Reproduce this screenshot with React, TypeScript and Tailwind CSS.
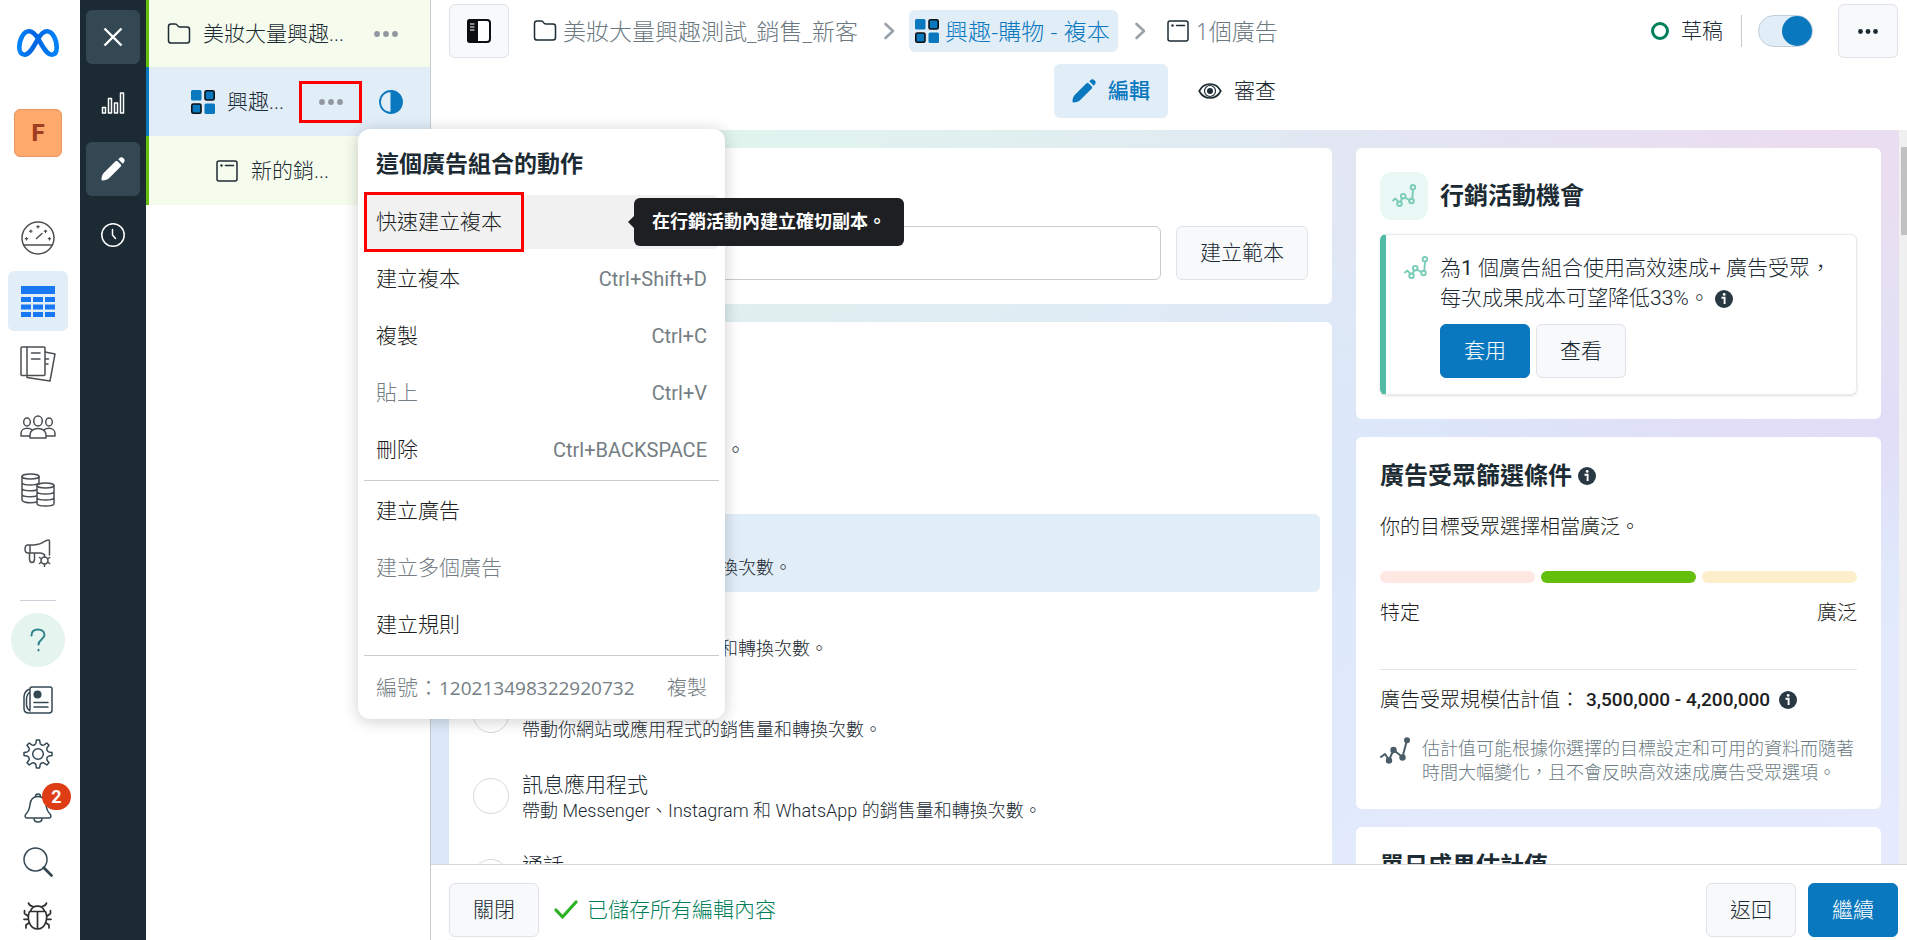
import { ReactNode, SVGProps } from "react";
import { clsx } from "clsx";

type IconProps = SVGProps<SVGSVGElement>;

const Icon = ({ children, ...props }: IconProps) => (
  <svg
    fill="none"
    stroke="currentColor"
    strokeWidth="1.5"
    strokeLinecap="round"
    strokeLinejoin="round"
    aria-hidden="true"
    {...props}
  >
    {children}
  </svg>
);

const MetaLogo = () => (
  <Icon viewBox="0 0 42 28" className="w-[42px] h-7" strokeWidth="4.6">
    <defs>
      <linearGradient id="meta" x1="0" x2="1">
        <stop offset="0" stopColor="#0082fb" />
        <stop offset="0.4" stopColor="#0064e0" />
        <stop offset="0.7" stopColor="#0073ee" />
        <stop offset="1" stopColor="#0082fb" />
      </linearGradient>
    </defs>
    <path
      stroke="url(#meta)"
      d="M21 9.5C18 4.8 15.500 2.300 12 2.300C6.500 2.300 2.300 10.500 2.300 18.500C2.300 23 4.500 25.700 7.600 25.700C11.500 25.700 14.500 21 17.500 16L21 9.900C24 4.800 26.800 2.300 30 2.300C35.500 2.300 39.700 10.200 39.700 18.600C39.700 23.300 37.700 25.700 34.600 25.700C31.200 25.700 28.700 22.500 24.500 15.500Z"
    />
  </Icon>
);

const GaugeIcon = () => (
  <Icon viewBox="0 0 34 34" className="size-[34px]">
    <circle cx="17" cy="17" r="16" />
    <path d="M2.500 24H31.500M15.500 17.500L21 12.500" />
    <path
      strokeWidth="1.2"
      d="M17 4.500V7M15.800 5.700H18.200M9.800 9V11.400M8.600 10.200H11M24.500 9V11.400M23.300 10.200H25.700M5.500 16.500V19M4.300 17.700H6.700M28.500 16.500V19M27.300 17.700H29.700"
    />
  </Icon>
);

const TableIcon = () => (
  <svg viewBox="0 0 34 31" className="w-[34px] h-[31px]" fill="#1877f2">
    <path d="M0 0H34V8H0ZM0 11H10V16H0ZM12 11H22V16H12ZM24 11H34V16H24ZM0 18.500H10V23.500H0ZM12 18.500H22V23.500H12ZM24 18.500H34V23.500H24ZM0 26H10V31H0ZM12 26H22V31H12ZM24 26H34V31H24Z" />
  </svg>
);

const PagesIcon = () => (
  <Icon viewBox="0 0 36 36" className="size-9">
    <rect x="1" y="1" width="24" height="28.500" rx="1" />
    <path d="M7 1V29.500M11.500 7H20M11.500 13H20M25 6L35 8L30 35L7 31.500V29.500M25.500 13H28.500M25.500 18H28" />
  </Icon>
);

const PeopleIcon = () => (
  <Icon viewBox="0 0 36 24" className="w-9 h-6">
    <ellipse cx="18" cy="6" rx="4.300" ry="5" />
    <ellipse cx="7" cy="7" rx="3.300" ry="4" />
    <ellipse cx="29" cy="7" rx="3.300" ry="4" />
    <path d="M10 23V20C10 16.500 13 13.500 18 13.500S26 16.500 26 20V23ZM10 21H1V18.500C1 15.500 3.500 13.300 7 13.300C9 13.300 10.500 13.700 11.700 14.700M26 21H35V18.500C35 15.500 32.500 13.300 29 13.300C27 13.300 25.500 13.700 24.300 14.700" />
  </Icon>
);

const CoinsIcon = () => (
  <Icon viewBox="0 0 34 34" className="size-[34px]">
    <ellipse cx="9.500" cy="3.500" rx="8.500" ry="2.500" />
    <path d="M1 3.500V27C1 28.500 5 29.800 9.500 29.800C12 29.800 14 29.600 16 29M18 3.500V11M1 9.500C1 11 5 12 9.500 12C13 12 16.500 11.300 17.500 10.300M1 15.300C1 16.800 5 17.800 9.500 17.800C12 17.800 14 17.600 15.800 17M1 21.200C1 22.700 5 23.700 9.500 23.700C12 23.700 14 23.500 15.800 23" />
    <ellipse cx="24.500" cy="12.500" rx="8.500" ry="2.500" />
    <path d="M16 12.500V30.500C16 32 20 33 24.500 33S33 32 33 30.500V12.500M16 18.500C16 20 20 21 24.500 21S33 20 33 18.500M16 24.500C16 26 20 27 24.500 27S33 26 33 24.500" />
  </Icon>
);

const MegaphoneIcon = () => (
  <Icon viewBox="0 0 28 28" className="size-7">
    <path d="M6 6C10 6 14 6 18 3.800C20.500 2.400 22.500 1 24.500 1C25.300 1 25.500 1.600 25.500 2.500V16M6 6V14H16C18 14 18.500 14.500 20 15.500M6 6H4C2 6 1 7.500 1 10S2 14 4 14H6M5.500 14V20C5.500 22.500 6.500 23.500 8 23.500C9.800 23.500 10.500 22 10.500 20V14" />
    <circle cx="20.500" cy="21.500" r="3.500" />
    <path d="M20.500 15.500V18M20.500 25V27.500M15.500 18.500L17.500 20M23.500 23L25.700 24.500M25.700 18.500L23.500 20M15.500 24.500L17.500 23" />
  </Icon>
);

const NewsIcon = () => (
  <Icon viewBox="0 0 30 28" className="w-[30px] h-7">
    <path d="M7 23.500V3C7 1.500 7.800 1 9 1H27C28.500 1 29 1.800 29 3V24C29 26 28 27 26 27H6C3 27 1 25.500 1 22.500V11C1 8 3 5 5.500 3.500M7 6C4.500 8 3.500 10 3.500 13V19C3.500 22 5 23.500 7 25M11 16.500H25M11 21H25" />
    <circle cx="14.500" cy="8.500" r="3.300" fill="currentColor" />
  </Icon>
);

const GearIcon = () => (
  <Icon viewBox="0 0 30 30" className="size-[30px]">
    <circle cx="15" cy="15" r="5.300" />
    <path d="M12.900 4.200L13.400 1H16.600L17.100 4.200A3 3 0 0 0 21.200 5.900L23.800 4L26 6.200L24.100 8.800A3 3 0 0 0 25.800 12.900L29 13.400V16.600L25.800 17.100A3 3 0 0 0 24.100 21.200L26 23.800L23.800 26L21.200 24.100A3 3 0 0 0 17.100 25.800L16.600 29H13.400L12.900 25.800A3 3 0 0 0 8.800 24.100L6.200 26L4 23.800L5.900 21.200A3 3 0 0 0 4.200 17.100L1 16.600V13.400L4.200 12.900A3 3 0 0 0 5.900 8.800L4 6.200L6.200 4L8.800 5.900A3 3 0 0 0 12.900 4.200Z" />
  </Icon>
);

const BellIcon = () => (
  <Icon viewBox="0 0 30 30" className="size-[30px]">
    <path d="M15 3.500C10 3.500 7.500 7 7 11.500C6.500 16.500 5.500 18.500 3 21C1.500 22.800 1.800 25 4 25H26C28.200 25 28.500 22.800 27 21C24.500 18.500 23.500 16.500 23 11.500C22.500 7 20 3.500 15 3.500ZM12.500 3.700C12.500 2 13.500 1 15 1S17.500 2 17.500 3.700M11 25.200C11 27.500 12.500 29 15 29S19 27.500 19 25.200" />
  </Icon>
);

const SearchIcon = () => (
  <Icon viewBox="0 0 30 30" className="size-[30px]">
    <circle cx="12.500" cy="12.500" r="11.500" />
    <path d="M20.800 20.800L28.500 28.500" strokeWidth="2.800" />
  </Icon>
);

const BugIcon = () => (
  <Icon viewBox="0 0 30 30" className="size-[30px] text-[#303030]" strokeWidth="1.700">
    <path d="M6.500 10.500H22.500C24 14 24 18.500 22.500 22C21 26 18.500 28 14.500 28S8 26 6.500 22C5 18.500 5 14 6.500 10.500ZM14.500 10.500V28M7.500 10.300C8.500 7 11 5.200 14.500 5.200S20.500 7 21.500 10.300M5.500 2C6 4 7.500 5 10 5.500M23.500 2C23 4 21.500 5 19 5.500M5.500 15.500L1.500 12.500V9.500M5.300 18.300H1M6.500 21.500L3 24V27M23.500 15.500L27.500 12.500V9.500M23.700 18.300H28M22.500 21.500L26 24V27" />
  </Icon>
);

const CloseIcon = () => (
  <Icon viewBox="0 0 24 24" className="size-6" strokeWidth="2.400" strokeLinecap="butt">
    <path d="M3.500 3.500L20.500 20.500M20.500 3.500L3.500 20.500" />
  </Icon>
);

const BarsIcon = () => (
  <Icon viewBox="0 0 24 24" className="size-6">
    <path d="M1.500 16.500H4.500V22H1.500ZM7.500 7.500H10.500V22H7.500ZM13.500 12H16.500V22H13.500ZM19.500 2H22.500V22H19.500Z" />
  </Icon>
);

const PencilIcon = () => (
  <svg viewBox="0 0 24 24" className="size-6" fill="currentColor" aria-hidden="true">
    <path d="M14.500 4.200Q15.500 3.300 16.500 4.200L19.800 7.500Q20.700 8.500 19.800 9.500L8.500 20.800C6.500 22.800 4.500 23.500 1.500 23.500Q.5 23.500 .5 22.500C.5 19.500 1.200 17.500 3.200 15.500ZM17.300 2.300L18.300 1.300C19.600 0 21.200 0 22.400 1.200L22.800 1.600C24 2.800 24 4.400 22.700 5.700L21.700 6.700Z" />
  </svg>
);

const ClockIcon = () => (
  <Icon viewBox="0 0 24 24" className="size-6">
    <circle cx="12" cy="12" r="11.200" />
    <path d="M11.500 6.500V12L14.500 15.500" />
  </Icon>
);

const FolderIcon = () => (
  <Icon viewBox="0 0 24 24" className="size-6 shrink-0 text-[#1c2b33]">
    <path d="M1.500 4.500C1.500 2.800 2.300 2 4 2H8C9.500 2 10 2.500 10.500 3.500C11 4.600 11.500 5 13 5H20C21.700 5 22.500 5.800 22.500 7.500V18.500C22.500 20.200 21.700 21 20 21H4C2.300 21 1.500 20.200 1.500 18.500Z" />
  </Icon>
);

const GridIcon = () => (
  <svg viewBox="0 0 24 24" className="size-6 shrink-0" fill="#0a78be" aria-hidden="true">
    <rect width="10.500" height="10.500" rx="1.500" />
    <rect x="14" y=".8" width="9.200" height="9.200" rx="1.500" stroke="#0b0f12" strokeWidth="1.600" />
    <rect x=".8" y="14" width="9.200" height="9.200" rx="1.500" stroke="#0b0f12" strokeWidth="1.600" />
    <rect x="13.500" y="13.500" width="10.500" height="10.500" rx="1.500" />
  </svg>
);

const WindowIcon = () => (
  <Icon viewBox="0 0 24 24" className="size-6 shrink-0 text-[#1c2b33]">
    <rect x="2" y="2" width="20" height="20" rx="2" />
    <path d="M10.500 6.500H18.500" />
    <circle cx="6.500" cy="6.500" r="1.200" fill="currentColor" stroke="none" />
  </Icon>
);

const PanelIcon = () => (
  <svg viewBox="0 0 24 24" className="size-6" aria-hidden="true">
    <rect x="1" y="1" width="22" height="22" rx="3" fill="#fff" stroke="#0b0f12" strokeWidth="2" />
    <path d="M3 0H11V24H3C1 24 0 23 0 21V3C0 1 1 0 3 0Z" fill="#0b0f12" />
    <path d="M3 5H7.500M3 8H7.500M3 11H7.500" stroke="#fff" strokeWidth="1.200" />
  </svg>
);

const EyeIcon = () => (
  <Icon viewBox="0 0 24 24" className="size-6" strokeWidth="1.700">
    <path d="M1.200 12C3.500 7.500 7.500 5 12 5S20.500 7.500 22.800 12C20.500 16.500 16.500 19 12 19S3.500 16.500 1.200 12Z" />
    <circle cx="12" cy="12" r="5.500" strokeWidth="1.200" />
    <circle cx="12" cy="12" r="3" fill="currentColor" stroke="none" />
  </Icon>
);

const ChevronIcon = () => (
  <Icon viewBox="0 0 12 18" className="w-3 h-[18px] text-[#9aa2a9]" strokeWidth="2.600">
    <path d="M2.500 2L10 9L2.500 16" />
  </Icon>
);

const DotsIcon = ({ className = "h-1.5 w-6" }: { className?: string }) => (
  <svg viewBox="0 0 24 6" className={className} fill="currentColor" aria-hidden="true">
    <circle cx="3" cy="3" r="2.900" />
    <circle cx="12" cy="3" r="2.900" />
    <circle cx="21" cy="3" r="2.900" />
  </svg>
);

const InfoIcon = () => (
  <svg viewBox="0 0 18 18" className="inline-block size-[18px] shrink-0" role="img" aria-label="資訊">
    <circle cx="9" cy="9" r="9" fill="#283943" />
    <path d="M6.500 7.800H9.600V14" stroke="#fff" strokeWidth="1.900" fill="none" />
    <circle cx="9.200" cy="4.400" r="1.400" fill="#fff" />
  </svg>
);

const SparkIcon = ({ className }: { className?: string }) => (
  <Icon viewBox="0 0 24 24" className={clsx("size-6 shrink-0 text-[#7accb8]", className)} strokeWidth="1.900">
    <path d="M1 16.500L3.500 14.500L6.500 18.200M8.500 18L10.200 14.200M13.300 13.700L17.200 16M20.300 14.600L21 5.500" />
    <circle cx="7.500" cy="19.700" r="2.300" />
    <circle cx="11.200" cy="12.200" r="2.300" />
    <circle cx="19.500" cy="17" r="2.300" />
    <circle cx="21" cy="3.300" r="2.300" />
  </Icon>
);

const EstimateIcon = () => (
  <Icon viewBox="0 0 30 27" className="w-[30px] h-[27px] shrink-0 text-[#4a5c68]" strokeWidth="2">
    <path d="M1 20L5 17L9 23L13.500 13L22.500 20L27 3" />
    <g fill="currentColor" stroke="none">
      <circle cx="9" cy="23.500" r="3.200" />
      <circle cx="13.500" cy="13" r="3.200" />
      <circle cx="22.500" cy="20.500" r="3.200" />
      <circle cx="27" cy="3.200" r="3" />
    </g>
  </Icon>
);

interface ButtonProps {
  children: ReactNode;
  primary?: boolean;
  className?: string;
  label?: string;
}

const Button = ({ children, primary, className, label }: ButtonProps) => (
  <button
    type="button"
    aria-label={label}
    className={clsx(
      "flex h-[54px] items-center justify-center rounded-md border",
      primary ? "border-[#0a78be] bg-[#0a78be] text-white" : "border-[#dee3e9] bg-[#f7f9fb]",
      className
    )}
  >
    {children}
  </button>
);

const railTop = [
  { label: "帳號總覽", icon: <GaugeIcon /> },
  { label: "行銷活動", icon: <TableIcon />, active: true },
  { label: "廣告報告", icon: <PagesIcon /> },
  { label: "廣告受眾", icon: <PeopleIcon /> },
  { label: "帳單", icon: <CoinsIcon /> },
  { label: "廣告設定", icon: <MegaphoneIcon /> },
];

const railBottom = [
  { label: "最新消息", icon: <NewsIcon /> },
  { label: "設定", icon: <GearIcon /> },
  { label: "通知", icon: <BellIcon />, badge: "2" },
  { label: "搜尋", icon: <SearchIcon /> },
  { label: "回報問題", icon: <BugIcon /> },
];

const NavRail = () => (
  <nav className="flex w-20 shrink-0 flex-col items-center pt-[29px] pr-1 text-[#4b4f52]">
    <a href="#home" aria-label="Meta">
      <MetaLogo />
    </a>
    <button
      type="button"
      className="mt-[52px] mb-[51px] size-12 shrink-0 rounded-md border border-[#e8955f] bg-[#ffa96c] text-2xl font-extrabold text-[#9e3d1f]"
    >
      F
    </button>
    <div className="flex flex-col gap-[3px]">
      {railTop.map((item) => (
        <a
          key={item.label}
          href="#nav"
          aria-label={item.label}
          className={clsx(
            "flex size-[60px] shrink-0 items-center justify-center rounded-md",
            item.active && "bg-[#e1edf7]"
          )}
        >
          {item.icon}
        </a>
      ))}
    </div>
    <hr className="mt-[17px] mb-3 w-9 border-[#c9d0d8]" />
    <button
      type="button"
      aria-label="說明"
      className="mb-[6px] flex size-[54px] shrink-0 items-center justify-center rounded-full bg-[#e6f4f0] text-[#2f8389]"
    >
      <Icon viewBox="0 0 16 24" className="h-6 w-4" strokeWidth="2">
        <path d="M1.500 7.500C1.500 3.500 4 1.500 8 1.500S14.500 3.800 14.500 7C14.500 11 8.500 11.500 8.500 16.500M8.500 21.800V22.500" />
      </Icon>
    </button>
    {railBottom.map((item) => (
      <button
        key={item.label}
        type="button"
        aria-label={item.label}
        className="relative flex h-[54px] w-[60px] shrink-0 items-center justify-center text-[#344854]"
      >
        {item.icon}
        {item.badge && (
          <span className="absolute top-[2px] -right-[3px] flex h-[27px] w-[29px] items-center justify-center rounded-full bg-[#dd3c14] text-lg font-bold text-white">
            {item.badge}
          </span>
        )}
      </button>
    ))}
  </nav>
);

const railTools = [
  { label: "關閉", icon: <CloseIcon />, filled: true },
  { label: "圖表", icon: <BarsIcon /> },
  { label: "編輯", icon: <PencilIcon />, filled: true },
  { label: "紀錄", icon: <ClockIcon /> },
];

const ToolRail = () => (
  <div className="flex w-[66px] shrink-0 flex-col items-center gap-3 bg-[#1c2b33] pt-[10px] text-white">
    {railTools.map((tool) => (
      <button
        key={tool.label}
        type="button"
        aria-label={tool.label}
        className={clsx(
          "flex size-[54px] shrink-0 items-center justify-center rounded-md",
          tool.filled && "bg-[#344854]"
        )}
      >
        {tool.icon}
      </button>
    ))}
  </div>
);

const CampaignTree = () => (
  <aside className="w-[285px] shrink-0 border-r border-[#c6ccd2]">
    <div className="flex h-[67px] items-center border-l-[3px] border-[#64be0c] bg-[#f5fbed] pr-8 pl-[18px]">
      <FolderIcon />
      <span className="ml-3 flex-1">美妝大量興趣...</span>
      <button type="button" aria-label="更多" className="text-[#9196a0]">
        <DotsIcon />
      </button>
    </div>
    <div className="flex h-[69px] items-center border-l-[3px] border-[#0a78be] bg-[#e1edf7] pr-[27px] pl-[42px]">
      <GridIcon />
      <span className="ml-3 flex-1">興趣...</span>
      <button
        type="button"
        aria-label="更多"
        className="flex h-[42px] w-[63px] items-center justify-center border-[3px] border-[#ff0000] text-[#9196a0]"
      >
        <DotsIcon />
      </button>
      <svg viewBox="0 0 24 24" className="ml-[17px] size-6" fill="none" stroke="#0a78be" aria-hidden="true">
        <circle cx="12" cy="12" r="11" strokeWidth="1.800" />
        <path d="M12 1A11 11 0 0 1 12 23Z" fill="#0a78be" />
      </svg>
    </div>
    <div className="flex h-[69px] items-center border-l-[3px] border-[#64be0c] bg-[#f5fbed] pl-[66px]">
      <WindowIcon />
      <span className="ml-3">新的銷...</span>
    </div>
  </aside>
);

const Header = () => (
  <header className="h-[130px] shrink-0 bg-white pt-1">
    <div className="flex h-[54px] items-center pr-[9px] pl-[18px]">
      <Button label="側邊欄" className="w-[60px]">
        <PanelIcon />
      </Button>
      <div className="ml-6 flex flex-1 items-center font-['Open_Sans','Noto_Sans_CJK_TC',sans-serif] text-[23px] text-[#6b787f]">
        <a href="#campaign" className="flex items-center gap-[6px]">
          <FolderIcon />
          美妝大量興趣測試_銷售_新客
        </a>
        <span className="mr-[14px] ml-[25px]">
          <ChevronIcon />
        </span>
        <a
          href="#adset"
          className="flex h-[42px] items-center gap-[6px] rounded-md bg-[#e1edf7] pr-2 pl-[6px] text-[#0a78be]"
        >
          <GridIcon />
          興趣-購物 - 複本
        </a>
        <span className="mr-5 ml-4">
          <ChevronIcon />
        </span>
        <a href="#ad" className="flex items-center gap-[6px]">
          <WindowIcon />
          1個廣告
        </a>
      </div>
      <span className="size-[18px] rounded-full border-[3px] border-[#00805a]" />
      <span className="mr-[18px] ml-3">草稿</span>
      <span className="h-8 w-px bg-[#c6ccd2]" />
      <label className="mr-[25px] ml-4 flex h-8 w-[55px] items-center justify-end rounded-full border border-[#c3cfd9] bg-[#e1edf7]">
        <input type="checkbox" defaultChecked aria-label="啟用廣告組合" className="sr-only" />
        <span className="size-[30px] rounded-full bg-[#0a78be]" />
      </label>
      <Button label="更多選項" className="w-[60px]">
        <DotsIcon className="h-[5px] w-5" />
      </Button>
    </div>
    <div className="mt-[6px] flex justify-center gap-3 pl-[10px]">
      <button
        type="button"
        className="flex h-[54px] items-center gap-3 rounded-md bg-[#e1edf7] px-[18px] font-medium text-[#0a78be]"
      >
        <PencilIcon />
        編輯
      </button>
      <button type="button" className="flex h-[54px] items-center gap-3 px-[18px]">
        <EyeIcon />
        審查
      </button>
    </div>
  </header>
);

const destinations = [
  { title: "網站", note: "帶動你網站的銷售量和轉換次數。", selected: true },
  { title: "應用程式", note: "帶動你應用程式的銷售量和轉換次數。" },
  { title: "網站和應用程式", note: "帶動你網站或應用程式的銷售量和轉換次數。" },
  { title: "訊息應用程式", note: "帶動 Messenger、Instagram 和 WhatsApp 的銷售量和轉換次數。" },
  { title: "通話", note: "透過通話帶動銷售量。" },
];

const FormColumn = () => (
  <div className="flex min-w-0 flex-1 flex-col gap-[18px]">
    <section className="rounded-md bg-white px-6 pt-5 pb-6">
      <label htmlFor="adset-name" className="block text-2xl font-bold leading-9">
        廣告組合名稱
      </label>
      <div className="mt-[22px] flex gap-[15px]">
        <input
          id="adset-name"
          defaultValue="興趣-購物 - 複本"
          className="h-[54px] min-w-0 flex-1 rounded-md border border-[#c6ccd2] px-3"
        />
        <Button className="w-[132px]">建立範本</Button>
      </div>
    </section>
    <section className="rounded-md bg-white px-3 pt-5">
      <h2 className="px-3 text-2xl font-bold leading-9">轉換</h2>
      <h3 className="mt-6 px-3 font-bold leading-[30px]">轉換位置</h3>
      <p className="px-3 pt-[3px] leading-[30px]">選擇你想要促成銷售的地點。</p>
      <div className="mt-[49px] flex flex-col gap-[3px]">
        {destinations.map((item) => (
          <label
            key={item.title}
            className={clsx("flex h-[78px] items-center rounded-md px-3", item.selected && "bg-[#e1edf7]")}
          >
            <input
              type="radio"
              name="destination"
              defaultChecked={item.selected}
              className="size-9 shrink-0 appearance-none rounded-full border border-[#d3d8de] bg-white checked:border-[10px] checked:border-[#0a78be]"
            />
            <span className="ml-[13px] pt-[2px]">
              <span className="block leading-7">{item.title}</span>
              <span className="block text-lg leading-6">{item.note}</span>
            </span>
          </label>
        ))}
      </div>
    </section>
  </div>
);

const InsightColumn = () => (
  <div className="flex w-[525px] shrink-0 flex-col gap-[18px]">
    <section className="rounded-md bg-white p-6">
      <div className="flex items-center gap-3">
        <span className="flex size-12 items-center justify-center rounded-xl bg-[#e9f8f5]">
          <SparkIcon />
        </span>
        <h2 className="text-2xl font-bold">行銷活動機會</h2>
      </div>
      <div className="mt-[14px] flex gap-3 rounded-md border border-l-[6px] border-[#e8ebee] border-l-[#52bba6] pt-[18px] pb-4 pl-[18px] shadow-sm">
        <SparkIcon className="mt-[3px]" />
        <div>
          <p className="leading-[30px]">
            為<b>1</b> 個廣告組合使用高效速成+ 廣告受眾，
            <br />
            每次成果成本可望降低33%。 <InfoIcon />
          </p>
          <div className="mt-[11px] flex gap-[6px]">
            <Button primary className="w-[90px]">
              套用
            </Button>
            <Button className="w-[90px]">查看</Button>
          </div>
        </div>
      </div>
    </section>
    <section className="rounded-md bg-white px-6 pt-[21px] pb-6 text-xl text-[#1c1e21]">
      <h2 className="flex items-center gap-[6px] text-2xl font-bold leading-9 text-[#1c2b33]">
        廣告受眾篩選條件 <InfoIcon />
      </h2>
      <p className="mt-[18px] leading-[30px]">你的目標受眾選擇相當廣泛。</p>
      <div className="mt-[29px] flex gap-[6px]">
        <span className="h-3 flex-1 rounded-full bg-[#ffe8e3]" />
        <span className="h-3 flex-1 rounded-full bg-[#64be0c]" />
        <span className="h-3 flex-1 rounded-full bg-[#feefcc]" />
      </div>
      <div className="mt-[15px] flex justify-between leading-[30px]">
        <span>特定</span>
        <span>廣泛</span>
      </div>
      <hr className="mt-[41px] border-[#e3e6e9]" />
      <p className="mt-[15px] flex items-center leading-[30px]">
        廣告受眾規模估計值：
        <span className="mr-[9px] ml-[6px] text-[19px] font-medium">3,500,000 - 4,200,000</span>
        <InfoIcon />
      </p>
      <div className="mt-[22px] flex gap-3 text-lg text-[#6b7b83]">
        <EstimateIcon />
        <p className="leading-6">估計值可能根據你選擇的目標設定和可用的資料而隨著時間大幅變化，且不會反映高效速成廣告受眾選項。</p>
      </div>
    </section>
    <section className="rounded-md bg-white px-6 pt-[21px] pb-6">
      <h2 className="text-2xl font-bold leading-9">單日成果估計值</h2>
    </section>
  </div>
);

const Footer = () => (
  <footer className="flex h-[76px] shrink-0 items-center border-t border-[#d5d9dd] bg-white pt-[14px] pr-[9px] pl-[18px]">
    <Button className="w-[90px]">關閉</Button>
    <Icon viewBox="0 0 24 20" className="ml-[15px] h-5 w-6 text-[#2db224]" strokeWidth="3.200">
      <path d="M2 10L8.500 17L22 2" />
    </Icon>
    <span className="ml-[9px] flex-1 text-[#00805a]">已儲存所有編輯內容</span>
    <Button className="mr-3 w-[90px]">返回</Button>
    <Button primary className="w-[90px]">
      繼續
    </Button>
  </footer>
);

interface MenuItemProps {
  label: string;
  shortcut?: string;
  disabled?: boolean;
}

const MenuItem = ({ label, shortcut, disabled }: MenuItemProps) => (
  <li role="none">
    <button
      type="button"
      role="menuitem"
      disabled={disabled}
      className="flex h-[54px] w-full items-center justify-between px-3 disabled:text-[#747e84]"
    >
      {label}
      {shortcut && <kbd className="font-[Roboto] text-xl font-normal text-[#747e84]">{shortcut}</kbd>}
    </button>
  </li>
);

const ActionMenu = () => (
  <div
    role="menu"
    className="absolute top-[129px] left-[358px] z-10 w-[367px] rounded-xl bg-white px-[6px] pt-[18px] text-[#1c1e21] shadow-[0_2px_16px_rgba(0,0,0,0.2)]"
  >
    <h2 className="px-3 text-[23px] font-bold leading-9 text-[#1c2b33]">這個廣告組合的動作</h2>
    <ul className="mt-3 flex flex-col gap-[3px]">
      <li role="none" className="relative h-[54px] rounded-md bg-[#f1f1f1]">
        <button
          type="button"
          role="menuitem"
          className="absolute -top-[3px] left-0 flex h-[60px] w-40 items-center border-[3px] border-[#ff0000] px-[9px]"
        >
          快速建立複本
        </button>
        <span
          role="tooltip"
          className="absolute top-[3px] left-[270px] flex h-12 w-[270px] items-center rounded-md bg-[#1e1f23] px-[18px] text-lg font-bold whitespace-nowrap text-white before:absolute before:-left-[6px] before:border-y-[6px] before:border-r-[6px] before:border-y-transparent before:border-r-[#1e1f23]"
        >
          在行銷活動內建立確切副本。
        </span>
      </li>
      <MenuItem label="建立複本" shortcut="Ctrl+Shift+D" />
      <MenuItem label="複製" shortcut="Ctrl+C" />
      <MenuItem label="貼上" shortcut="Ctrl+V" disabled />
      <MenuItem label="刪除" shortcut="Ctrl+BACKSPACE" />
      <li role="separator" className="border-t border-[#c9cbcd]" />
      <MenuItem label="建立廣告" />
      <MenuItem label="建立多個廣告" disabled />
      <MenuItem label="建立規則" />
    </ul>
    <div className="mt-[3px] flex h-16 items-center justify-between border-t border-[#c9cbcd] px-3 text-[#747e84]">
      <span>
        編號：<span className="font-['Open_Sans'] text-[19px] font-normal">120213498322920732</span>
      </span>
      <button type="button" className="text-xl">
        複製
      </button>
    </div>
  </div>
);

const App = () => (
  <div className="relative flex h-screen overflow-hidden bg-white font-[Roboto,'Noto_Sans_CJK_TC',sans-serif] text-[21px] leading-[30px] font-light text-[#1c2b33]">
    <NavRail />
    <ToolRail />
    <CampaignTree />
    <div className="flex min-w-0 flex-1 flex-col">
      <Header />
      <div className="flex min-h-0 flex-1">
        <main className="flex min-w-0 flex-1 gap-6 overflow-hidden bg-[radial-gradient(ellipse_at_20%_0%,#e0f4ee_0%,transparent_35%),radial-gradient(ellipse_at_95%_5%,#ecdcef_0%,transparent_30%),radial-gradient(ellipse_at_95%_40%,#e1dcf8_0%,transparent_25%),linear-gradient(160deg,#e3eaf0_10%,#dbe8fa_55%,#e6ebfd_100%)] pt-[18px] pr-[18px] pl-[18px]">
          <FormColumn />
          <InsightColumn />
        </main>
        <div className="flex w-2 shrink-0 flex-col bg-[#f0f0f0] pt-[17px] pl-[2px]">
          <span className="h-[88px] bg-[#c1c1c1]" />
        </div>
      </div>
      <Footer />
    </div>
    <ActionMenu />
  </div>
);

export default App;
